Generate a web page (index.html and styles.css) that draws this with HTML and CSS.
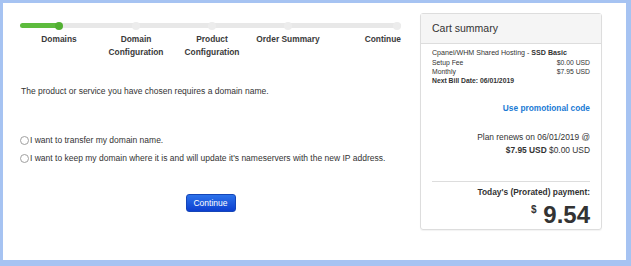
FILE: index.html
```html
<!DOCTYPE html>
<html lang="en">
<head>
  <meta charset="UTF-8">
  <meta name="viewport" content="width=device-width, initial-scale=1.0">
  <title>Choose a Domain</title>
  <link rel="stylesheet" href="styles.css">
</head>
<body>

  <div class="frame">
    <section class="main">
      <div class="steps">
        <div class="step first">
          <div class="bar"><span class="dot done"></span></div>
          <div class="label">Domains</div>
        </div>
        <div class="step">
          <div class="bar"><span class="dot"></span></div>
          <div class="label">Domain<br>Configuration</div>
        </div>
        <div class="step">
          <div class="bar"><span class="dot"></span></div>
          <div class="label">Product<br>Configuration</div>
        </div>
        <div class="step">
          <div class="bar"><span class="dot"></span></div>
          <div class="label">Order Summary</div>
        </div>
        <div class="step last">
          <div class="bar"><span class="dot"></span></div>
          <div class="label">Continue</div>
        </div>
      </div>

      <p class="intro">The product or service you have chosen requires a domain name.</p>

      <div class="options">
        <label class="option"><input type="radio" name="domain"> I want to transfer my domain name.</label>
        <label class="option"><input type="radio" name="domain"> I want to keep my domain where it is and will update it's nameservers with the new IP address.</label>
      </div>

      <div class="actions">
        <button class="btn-continue">Continue</button>
      </div>
    </section>

    <aside class="cart">
      <div class="cart-head">Cart summary</div>
      <div class="cart-body">
        <div class="product">Cpanel/WHM Shared Hosting - <b>SSD Basic</b></div>
        <div class="line"><span>Setup Fee</span><span>$0.00 USD</span></div>
        <div class="line"><span>Monthly</span><span>$7.95 USD</span></div>
        <div class="bill">Next Bill Date: 06/01/2019</div>

        <a class="promo" href="#">Use promotional code</a>

        <div class="renew">
          Plan renews on 06/01/2019 @<br>
          <b>$7.95 USD</b> $0.00 USD
        </div>

        <div class="total">
          <div class="total-label">Today's (Prorated) payment:</div>
          <div class="amount"><sup>$</sup> 9.54</div>
        </div>
      </div>
    </aside>
  </div>

</body>
</html>
```

FILE: styles.css
```css
body {
  margin: 0;
  font-family: 'Liberation Sans', Arial, sans-serif;
  color: #333;
  background-color: #ffffff;
}
.frame {
  box-sizing: border-box;
  width: 631px;
  height: 266px;
  border-style: solid;
  border-color: #a6c3f2;
  border-width: 3px 5px 6px 3px;
  padding: 10px 0 0 17px;
  display: flex;
  gap: 19px;
}
.main {
  width: 381px;
  flex-shrink: 0;
  padding-top: 10px;
}
.steps {
  display: grid;
  grid-template-columns: 78px 76px 76px 76px 75px;
}
.bar {
  height: 5px;
  background-color: #e8e8e8;
  display: flex;
  align-items: center;
  justify-content: center;
}
.first .bar {
  border-radius: 3px 0 0 3px;
  background: linear-gradient(to right, #5dbb3d 50%, #e8e8e8 50%);
}
.last .bar {
  border-radius: 0 3px 3px 0;
  justify-content: flex-end;
}
.dot {
  width: 8px;
  height: 8px;
  border-radius: 50%;
  background-color: #ececec;
}
.dot.done {
  background-color: #52b032;
}
.label {
  margin-top: 5px;
  font-size: 8.4px;
  font-weight: bold;
  line-height: 13px;
  text-align: center;
  color: #3a3a3a;
  white-space: nowrap;
}
.last .label {
  text-align: right;
}
.intro {
  margin: 26px 0 0 1px;
  font-size: 8.5px;
  line-height: 12px;
}
.options {
  margin-top: 36px;
  display: flex;
  flex-direction: column;
  gap: 4px;
}
.option {
  display: flex;
  align-items: center;
  font-size: 8.5px;
  line-height: 14px;
  white-space: nowrap;
}
.option input {
  appearance: none;
  width: 9px;
  height: 9px;
  margin: 1px 1px 0 0;
  border: 1px solid #a0a0a0;
  border-radius: 50%;
  background-color: #fff;
}
.actions {
  margin-top: 27px;
  text-align: center;
}
.btn-continue {
  width: 50px;
  height: 18px;
  padding: 0;
  font-family: inherit;
  font-size: 8.5px;
  color: white;
  background: linear-gradient(#2c72ea, #0c3fd0);
  border: 1px solid #1546b8;
  border-radius: 3px;
  cursor: pointer;
}
.cart {
  box-sizing: border-box;
  width: 182px;
  height: 217px;
  border: 1px solid #dddddd;
  border-radius: 3px;
  box-shadow: 0 1px 1px rgba(0, 0, 0, 0.05);
}
.cart-head {
  height: 29px;
  padding-left: 11px;
  font-size: 10.5px;
  line-height: 29px;
  color: #333;
  background-color: #f5f5f5;
  border-bottom: 1px solid #dddddd;
}
.cart-body {
  padding: 5px 11px 0 11px;
  font-size: 7px;
  line-height: 9px;
}
.product {
  font-size: 7.1px;
}
.line {
  display: flex;
  justify-content: space-between;
  font-size: 6.8px;
}
.bill {
  font-size: 6.8px;
  font-weight: bold;
}
.promo {
  display: block;
  margin-top: 17px;
  text-align: right;
  font-size: 8.3px;
  font-weight: bold;
  line-height: 12px;
  color: #1a7ad4;
  text-decoration: none;
}
.renew {
  margin-top: 17px;
  text-align: right;
  font-size: 8.4px;
  line-height: 13px;
}
.total {
  margin-top: 24px;
  padding-top: 5px;
  border-top: 1px solid #dddddd;
  text-align: right;
}
.total-label {
  font-size: 8.4px;
  font-weight: bold;
  line-height: 11px;
}
.amount {
  font-size: 24px;
  font-weight: bold;
  line-height: 24px;
  color: #333;
}
.amount sup {
  font-size: 10px;
  vertical-align: 10px;
}
```
